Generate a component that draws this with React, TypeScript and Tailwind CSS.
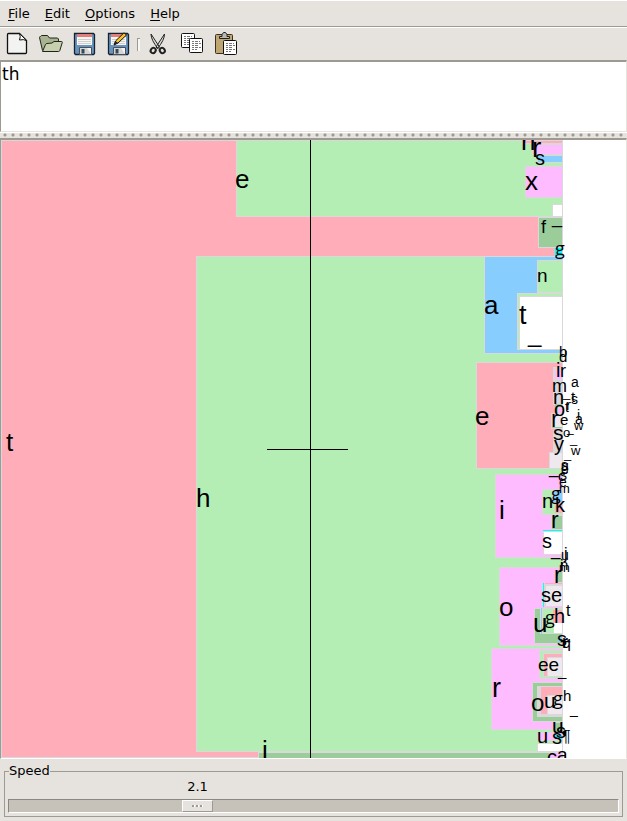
import React, { useState } from "react";

type Box = [x: number, y: number, right: number, bottom: number, fill: string, outline?: boolean];
type Glyph = [text: string, x: number, baseline: number, size: number];

const PINK = "#ffaeb9";
const GREEN = "#b4eeb4";
const DARK = "#9bcd9b";
const BLUE = "#87ceff";
const PLUM = "#ffbbff";
const GREY = "#eee9ee";
const LINE = "#dbd8db";
const CYAN = "#00ffff";
const WHITE = "#ffffff";

const boxes: Box[] = [
  [1, 140, 562, 758, PINK],
  [236, 140, 562, 217, GREEN],
  [522, 140, 562, 144, PINK],
  [532, 144, 562, 155, PLUM],
  [537, 155, 562, 163, BLUE],
  [525, 166, 562, 198, PLUM],
  [552, 204, 562, 217, WHITE],
  [538, 217, 562, 248, DARK],
  [555, 248, 562, 256, CYAN, false],
  [196, 256, 562, 752, GREEN],
  [484, 256, 562, 354, BLUE],
  [537, 260, 562, 293, GREEN],
  [517, 293, 562, 350, GREEN],
  [519, 296, 562, 350, WHITE],
  [476, 362, 562, 469, PINK],
  [553, 367, 562, 405, LINE, false],
  [555, 370, 562, 379, PLUM, false],
  [555, 404, 562, 414, DARK, false],
  [558, 407, 562, 414, PLUM, false],
  [551, 413, 562, 429, GREY],
  [552, 427, 562, 428, DARK, false],
  [553, 430, 562, 452, LINE, false],
  [549, 452, 562, 469, GREY],
  [495, 474, 562, 558, PLUM],
  [542, 489, 562, 515, GREEN],
  [552, 490, 562, 503, BLUE],
  [555, 503, 562, 513, PINK, false],
  [551, 515, 562, 530, DARK],
  [543, 530, 562, 531, CYAN, false],
  [543, 531, 562, 555, WHITE],
  [499, 567, 562, 646, PLUM],
  [555, 571, 562, 583, DARK],
  [542, 583, 562, 607, LINE, false],
  [543, 583, 544, 607, CYAN, false],
  [545, 583, 562, 584, PINK, false],
  [546, 586, 562, 606, GREY, false],
  [534, 608, 562, 644, DARK],
  [540, 608, 562, 634, LINE, false],
  [541, 608, 542, 634, BLUE, false],
  [543, 609, 562, 633, GREEN, false],
  [553, 610, 562, 623, PINK, false],
  [554, 623, 562, 633, WHITE, false],
  [558, 636, 562, 642, BLUE, false],
  [491, 648, 562, 730, PLUM],
  [539, 650, 562, 679, GREEN],
  [543, 653, 562, 677, PINK],
  [547, 657, 562, 677, GREY],
  [532, 682, 562, 722, DARK],
  [537, 686, 562, 717, LINE, false],
  [541, 687, 562, 714, PINK, false],
  [547, 695, 562, 715, GREY],
  [553, 722, 562, 732, DARK],
  [537, 732, 562, 741, PLUM],
  [555, 735, 562, 739, CYAN, false],
  [537, 743, 562, 752, WHITE],
  [258, 752, 562, 759, DARK],
  [549, 752, 562, 759, PLUM],
];

const glyphs: Glyph[] = [
  ["t", 6, 451, 26], ["e", 235, 188, 26], ["n", 521, 150, 26], ["r", 532, 157, 28],
  ["s", 535, 165, 20], ["x", 525, 190, 26], ["f", 541, 233, 18], ["_", 552, 223, 18],
  ["h", 196, 507, 26], ["a", 484, 314, 26], ["n", 537, 282, 19], ["t", 519, 324, 27],
  ["_", 528, 342, 24], ["e", 475, 425, 26], ["i", 499, 519, 26], ["o", 499, 616, 26],
  ["r", 492, 697, 27], ["i", 262, 759, 26], ["b", 559, 357, 15], ["d", 559, 362, 15],
  ["i", 556, 377, 20], ["r", 560, 377, 18], ["m", 552, 392, 18], ["n", 553, 404, 20],
  ["_", 563, 397, 13], ["o", 554, 416, 20], ["r", 551, 427, 23], ["e", 560, 425, 15],
  ["s", 553, 440, 21], ["o", 563, 437, 13], ["_", 567, 432, 12], ["y", 554, 451, 20],
  ["a", 571, 387, 14], ["t", 571, 402, 15], ["s", 571, 404, 14], ["r", 566, 410, 15],
  ["t", 565, 412, 14], ["i", 577, 420, 14], ["a", 575, 424, 14], ["w", 574, 430, 13],
  ["_", 570, 443, 13], ["w", 571, 455, 13], ["_", 564, 458, 13], ["s", 561, 470, 14],
  ["g", 561, 471, 14], ["e", 561, 474, 14], ["_", 549, 474, 17], ["c", 558, 481, 15],
  ["s", 560, 480, 14], ["e", 559, 487, 14], ["m", 559, 493, 13], ["n", 542, 508, 20],
  ["k", 555, 512, 20], ["r", 551, 528, 23], ["s", 542, 548, 20], ["_", 551, 556, 17],
  ["u", 561, 560, 14], ["j", 564, 559, 16], ["i", 560, 571, 16], ["n", 560, 570, 15],
  ["m", 559, 572, 13], ["r", 554, 583, 23], ["se", 541, 602, 20], ["t", 566, 616, 16],
  ["h", 554, 623, 20], ["u", 533, 632, 26], ["s", 557, 646, 20], ["r", 562, 648, 18],
  ["q", 562, 648, 16], ["_", 561, 639, 16], ["ee", 538, 671, 19], ["_", 558, 676, 15],
  ["o", 531, 711, 24], ["u", 544, 708, 21], ["h", 563, 701, 15], ["_", 570, 714, 14],
  ["u", 552, 733, 21], ["s", 556, 738, 20], ["u", 537, 743, 20], ["s", 552, 744, 20],
  ["¶", 562, 742, 16], ["c", 547, 764, 20], ["a", 557, 761, 19],
];

const doubleStorey: Glyph[] = [
  ["g", 555, 255, 18], ["g", 551, 500, 18], ["g", 545, 624, 18], ["g", 553, 705, 18],
];

function ZoomingView() {
  return (
    <svg className="block h-[618px] w-full bg-white" role="img" aria-label="Zooming letter boxes">
      <g transform="translate(-1 -140)">
        {boxes.map(([x, y, r, b, fill, outline], i) => (
          <g key={i} shapeRendering="crispEdges">
            <rect x={x} y={y} width={r - x} height={b - y} fill={outline === false ? fill : LINE} />
            {outline !== false && (
              <rect x={x + 1} y={y + 1} width={r - x - 1} height={b - y - 2} fill={fill} />
            )}
          </g>
        ))}
        <rect x="562" y="140" width="1" height="619" fill={LINE} />
        <g fontFamily="'Liberation Sans', Arial, sans-serif">
          {glyphs.map(([t, x, y, size], i) => (
            <text key={i} x={x} y={y} fontSize={size}>{t}</text>
          ))}
        </g>
        <g fontFamily="'Open Sans', sans-serif" fontWeight="500">
          {doubleStorey.map(([t, x, y, size], i) => (
            <text key={i} x={x} y={y} fontSize={size}>{t}</text>
          ))}
        </g>
        <path d="M310.500 140V759M267 449.500H348" stroke="#000" shapeRendering="crispEdges" />
      </g>
    </svg>
  );
}

function Lines({ x, y }: { x: number; y: number }) {
  return (
    <path
      d={`M${x} ${y + 0.5}h8M${x} ${y + 2.5}h9M${x} ${y + 4.5}h7M${x} ${y + 6.5}h9M${x} ${y + 8.5}h5`}
      stroke="#777"
      strokeDasharray="2 1 3 1"
    />
  );
}

function Sheet({ x, y }: { x: number; y: number }) {
  return (
    <>
      <rect x={x + 0.5} y={y + 0.5} width="13" height="14" rx="1" fill="#fff" stroke="#111" />
      <Lines x={x + 3} y={y + 3} />
    </>
  );
}

function Floppy() {
  return (
    <>
      <path d="M1.500 1.500h19l1 1v19l-1 1h-18l-1-1z" fill="#6993bd" stroke="#16222f" strokeWidth="1.300" />
      <path d="M4 2h15v11H4z" fill="#f6f6f4" />
      <path d="M4 2h15v3H4z" fill="#e37f7b" />
      <path d="M5 7.500h13M5 9.500h13M5 11.500h13" stroke="#cfcfcb" />
      <path d="M6.500 15.500h12v7h-12z" fill="#d5d5d2" stroke="#45515c" />
      <path d="M8.500 17h3v4.500h-3z" fill="#34495d" />
      <path d="M14 16l4 6V16z" fill="#f4f4f2" />
    </>
  );
}

const tools: { name: string; art: React.ReactNode }[] = [
  {
    name: "New",
    art: (
      <>
        <path d="M2.500 2.500q0-1 1-1h11l7 7v12q0 1-1 1h-17q-1 0-1-1z" fill="#f3f3f1" stroke="#111" strokeWidth="1.300" />
        <path d="M14.500 1.500q1.500 3 0 6.500q4-1 7 .5z" fill="#fff" stroke="#111" />
      </>
    ),
  },
  {
    name: "Open",
    art: (
      <>
        <path d="M3.500 18.500L.5 5.500q0-1 1-1l1-1h6l2 2.500h8l1 1v4" fill="#a9b391" stroke="#20251a" />
        <path d="M3.500 19.500l3-7q.5-1 1.500-1l5-.5 2-1.500h7.500q1 0 .8 1l-2.500 8q-.3 1-1.300 1z" fill="#c7cfad" stroke="#20251a" />
      </>
    ),
  },
  { name: "Save", art: <Floppy /> },
  {
    name: "Save As",
    art: (
      <>
        <Floppy />
        <path d="M7 13l1.500-4L17 .8l2.500 2.200-8.500 8z" fill="#f6c12b" stroke="#111" />
        <path d="M7 13l1.500-4 2.500 2z" fill="#222" />
      </>
    ),
  },
  {
    name: "Cut",
    art: (
      <>
        <path d="M5 2l8.500 13-1.500 1.500Q5 8 5 2zM18.500 2L10 15l1.500 1.500Q18.500 8 18.500 2z" fill="#d9d9d6" stroke="#222" />
        <g fill="none" stroke="#222" strokeWidth="2">
          <ellipse cx="7.200" cy="18.500" rx="2.400" ry="2.800" transform="rotate(35 7.200 18.500)" />
          <ellipse cx="16.300" cy="18.500" rx="2.400" ry="2.800" transform="rotate(-35 16.300 18.500)" />
        </g>
      </>
    ),
  },
  { name: "Copy", art: (<><Sheet x={1} y={1} /><Sheet x={9} y={6} /></>) },
  {
    name: "Paste",
    art: (
      <>
        <rect x="1.500" y="2.500" width="17" height="19" rx="1" fill="#bfa572" stroke="#3b301c" />
        <path d="M5.500 6.500V4.500h2.500v-2l1.500-2h2l1.500 2v2h2.500v2z" fill="#b8b8b4" stroke="#222" />
        <Sheet x={9} y={8} />
      </>
    ),
  },
];

function Tool({ index }: { index: number }) {
  return (
    <button type="button" aria-label={tools[index].name} className="flex h-[34px] w-[34px] items-center justify-center">
      <svg width="24" height="24" viewBox="0 0 24 24">{tools[index].art}</svg>
    </button>
  );
}

const menus = ["File", "Edit", "Options", "Help"];

export default function App() {
  const [text, setText] = useState("th");
  const [speed, setSpeed] = useState(2.1);
  const ratio = speed / 7;

  return (
    <div className="flex min-h-screen flex-col bg-[#e6e3de] font-['DejaVu_Sans',sans-serif] text-[13px] text-black">
      <nav className="flex h-[27px] items-center gap-[15px] border-t border-b border-t-white border-b-[#9d9a92] px-2">
        {menus.map((m) => (
          <button key={m} type="button" className="leading-4">
            <span className="underline underline-offset-2">{m[0]}</span>
            {m.slice(1)}
          </button>
        ))}
      </nav>
      <div role="toolbar" aria-label="Main" className="flex h-[33px] items-center border-t border-white">
        {[0, 1, 2, 3].map((i) => <Tool key={i} index={i} />)}
        <span className="mx-px h-[13px] w-[3px] border-l border-t border-[#9d9a92] bg-[#f8f7f5]" />
        {[4, 5, 6].map((i) => <Tool key={i} index={i} />)}
      </div>
      <textarea
        aria-label="Text"
        spellCheck={false}
        value={text}
        onChange={(e) => setText(e.target.value)}
        className="block h-[72px] w-full resize-none border-t-2 border-r border-b border-l border-[#9d9a92] border-r-[#e6e3de] border-b-[#e6e3de] bg-white px-px py-px text-[17px] leading-[22px] outline-none"
      />
      <div className="h-[6px] border-t border-white bg-[radial-gradient(circle_at_2px_2px,#9d9a92_1px,transparent_2px)] bg-[size:8px_6px] bg-[position:3px_0px]" />
      <main className="border border-t-2 border-t-[#9d9a92] border-r-[#e6e3de] border-b-white border-l-[#9d9a92]">
        <ZoomingView />
      </main>
      <fieldset className="mx-1 mt-1 border border-[#9d9a92] px-[3px] pb-[3px]">
        <legend className="ml-px leading-4">Speed</legend>
        <div className="pr-[31px]">
          <output htmlFor="speed" className="block w-[31px] text-center leading-4" style={{ marginLeft: `${ratio * 100}%` }}>
            {speed.toFixed(1)}
          </output>
        </div>
        <input
          id="speed"
          aria-label="Speed"
          type="range"
          min={0}
          max={7}
          step={0.1}
          value={speed}
          onChange={(e) => setSpeed(Number(e.target.value))}
          className="mt-1 block h-[14px] w-full appearance-none border border-t-[#8a8880] border-r-white border-b-white border-l-[#8a8880] bg-[#c6c2ba] [&::-webkit-slider-thumb]:h-3 [&::-webkit-slider-thumb]:w-[31px] [&::-webkit-slider-thumb]:appearance-none [&::-webkit-slider-thumb]:border [&::-webkit-slider-thumb]:border-t-white [&::-webkit-slider-thumb]:border-r-[#9d9a92] [&::-webkit-slider-thumb]:border-b-[#9d9a92] [&::-webkit-slider-thumb]:border-l-white [&::-webkit-slider-thumb]:bg-[#e6e3de] [&::-webkit-slider-thumb]:bg-[linear-gradient(90deg,#9d9a92_2px,#fff_2px,#fff_3px,transparent_3px,transparent_4px,#9d9a92_4px,#9d9a92_6px,#fff_6px,#fff_7px,transparent_7px,transparent_8px,#9d9a92_8px,#9d9a92_10px,#fff_10px)] [&::-webkit-slider-thumb]:bg-[size:11px_2px] [&::-webkit-slider-thumb]:bg-[position:9px_4px] [&::-webkit-slider-thumb]:bg-no-repeat"
        />
      </fieldset>
    </div>
  );
}
